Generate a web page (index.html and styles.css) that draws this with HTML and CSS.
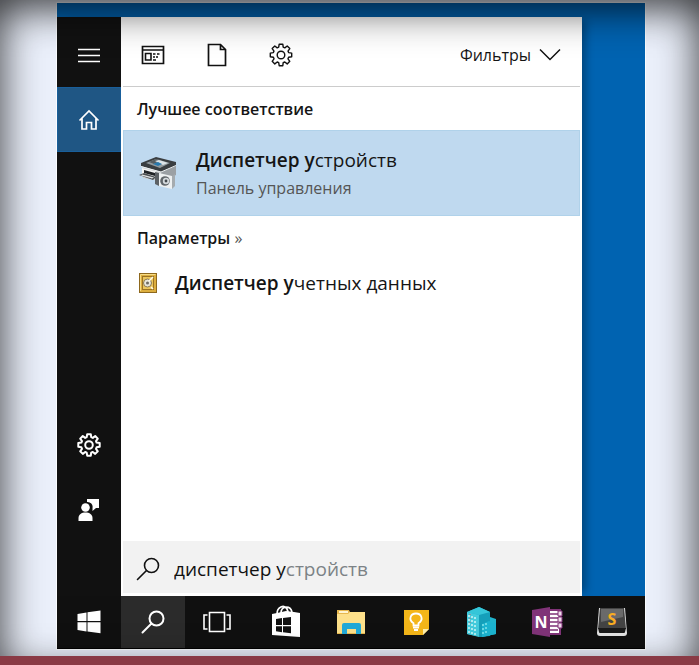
FILE: index.html
```html
<!DOCTYPE html>
<html lang="ru">
<head>
<meta charset="utf-8">
<meta name="viewport" content="width=device-width, initial-scale=1">
<title>Диспетчер устройств</title>
<link rel="stylesheet" href="styles.css">
</head>
<body>
<svg class="defs" width="0" height="0" aria-hidden="true">
  <symbol id="gear" viewBox="0 0 24 24">
    <g fill="none" stroke="currentColor" stroke-linejoin="round">
      <path d="M10.2 1.2h3.6l.4 3 1.6.7 2.4-1.9 2.6 2.6-1.8 2.5.6 1.5 3.1.5v3.7l-3.1.5-.6 1.5 1.8 2.5-2.6 2.6-2.4-1.9-1.6.7-.4 3h-3.6l-.5-3-1.5-.7-2.4 1.9-2.6-2.6 1.8-2.5-.6-1.5-3.1-.5v-3.7l3.1-.5.6-1.5-1.8-2.5 2.6-2.6 2.4 1.9 1.5-.7z"/>
      <circle cx="12" cy="12" r="3.8"/>
    </g>
  </symbol>
  <symbol id="loupe" viewBox="0 0 24 24">
    <g fill="none" stroke="currentColor" stroke-linecap="round"><circle cx="15.5" cy="8.5" r="7"/><path d="M10.5 13.5 1.5 22.5"/></g>
  </symbol>
</svg>

<main class="desktop">
  <div class="start">
    <nav class="rail" aria-label="Меню">
      <button class="rail-button menu" aria-label="Меню">
        <svg width="24" height="16" viewBox="0 0 24 16"><path d="M1 2.500h22M1 8.500h22M1 14.500h22" stroke="#fff" stroke-width="1.600"/></svg>
      </button>
      <button class="rail-button home" aria-label="Главная">
        <svg width="22" height="22" viewBox="0 0 22 22"><path d="M1.500 11.500 11 2l9.500 9.500M4 9.500V20h4.500v-6.500h5V20H18V9.500" fill="none" stroke="#fff" stroke-width="1.700"/></svg>
      </button>
      <button class="rail-button rail-settings" aria-label="Параметры"><svg class="gear-light" width="24" height="24"><use href="#gear"/></svg></button>
      <button class="rail-button" aria-label="Отзывы">
        <svg width="24" height="24" viewBox="0 0 24 24"><path d="M10 1h12v9h-3l-3.500 3v-3a5 5 0 0 0-5.500-6z" fill="#fff"/><circle cx="8.500" cy="9.500" r="4.300" fill="#fff"/><path d="M1.500 23v-3c0-3.500 3-5.500 7-5.500s7 2 7 5.500v3z" fill="#fff"/></svg>
      </button>
    </nav>

    <section class="panel" aria-label="Результаты поиска">
      <header class="toolbar">
        <button class="tool" aria-label="Приложения">
          <svg width="24" height="20" viewBox="0 0 24 20"><path d="M1.500 1.500h21v17h-21zM1.500 5h21" fill="none" stroke="#111" stroke-width="1.700"/><path d="M4.500 8.500h5.500v6.500H4.500zM12 9h2.500M16 9h2.500M12 12h2M15 12h2M12 15h3" fill="none" stroke="#111" stroke-width="1.600"/></svg>
        </button>
        <button class="tool" aria-label="Документы">
          <svg width="20" height="24" viewBox="0 0 20 24"><path d="M1.500 1.500h12l5 5v16h-17zM13.500 1.500v5h5" fill="none" stroke="#111" stroke-width="1.700"/></svg>
        </button>
        <button class="tool" aria-label="Настройки"><svg class="gear-dark" width="24" height="24"><use href="#gear"/></svg></button>
        <button class="filters">Фильтры
          <svg width="22" height="13" viewBox="0 0 22 13"><path d="m1 1.500 10 10 10-10" fill="none" stroke="#111" stroke-width="1.500"/></svg>
        </button>
      </header>

      <h2 class="heading">Лучшее соответствие</h2>
      <button class="best">
        <svg class="device" width="40" height="36" viewBox="0 0 40 36">
          <path d="m5 12 18 4v10L5 23z" fill="#c9cccd"/>
          <path d="m23 16 15-7v11l-15 8z" fill="#9ba0a4"/>
          <path d="M3 8 18 2l20 5v4l-15 6L3 11z" fill="#3a3e41"/>
          <path d="m8 8 10-4 14 4-10 5z" fill="#929b9f"/>
          <path d="m11 7 7-3 5 1-7 4z" fill="#565d61"/>
          <path d="m17 6 4-1 9 3-5 2z" fill="#dde4e7"/>
          <path d="m15 9 5-2 4 2-4 2z" fill="#2878ad"/>
          <path d="m3 11.500 20 5.500 15-6.500" fill="none" stroke="#eef1f2"/>
          <path d="m4 13 14 3.500v7L4 20z" fill="#f4f5f5"/>
          <path d="m6 15 11 3v3L6 18z" fill="#202326"/>
          <path d="m1 20 5-2 12 4-3 3z" fill="#4b4f52"/>
          <path d="m4 19.500 12 3-2 1-11-3z" fill="#e0e2e3"/>
          <path d="m17 17 4 1v13l-4-2z" fill="#5c6165"/>
          <path d="m21 18 13 3v13l-13-3z" fill="#edf0f1"/>
          <path d="m34 21 3-2v12l-3 3z" fill="#a5abaf"/>
          <circle cx="27" cy="26" r="4.800" fill="#60666a"/><circle cx="28" cy="26" r="3.200" fill="#d5dadd"/><circle cx="28" cy="26" r="1.400" fill="#42484c"/>
        </svg>
        <span class="best-text">
          <span class="title"><b>Диспетчер у</b>стройств</span>
          <span class="subtitle">Панель управления</span>
        </span>
      </button>

      <h2 class="heading settings-heading">Параметры <span class="more">»</span></h2>
      <button class="result">
        <svg width="18" height="20" viewBox="0 0 18 20">
          <rect x=".5" y=".5" width="17" height="19" fill="#dcae3f" stroke="#8e681d"/>
          <rect x="3.500" y="3.500" width="11" height="13" fill="#ecc65c" stroke="#9b7324"/>
          <path d="M1.500 18V1.500h15" fill="none" stroke="#f6dc86"/>
          <circle cx="8.500" cy="10" r="4" fill="#e8e6dc" stroke="#8a7b55"/><circle cx="8.500" cy="10" r="1.500" fill="#6d6b62"/>
          <path d="m10 8 4-4M12 14l2 2" stroke="#fffbe8" stroke-width="1.500"/>
        </svg>
        <span class="title"><b>Диспетчер у</b>четных данных</span>
      </button>

      <label class="search">
        <svg class="search-loupe" width="24" height="24"><use href="#loupe"/></svg>
        <span class="query"><input type="text" size="9" value="диспетчер у" aria-label="Поиск"><span class="hint">стройств</span></span>
      </label>
    </section>
  </div>

  <footer class="taskbar">
    <button class="task" aria-label="Пуск">
      <svg width="24" height="24" viewBox="0 0 24 24"><path d="M.5 4l9-1.500V11H.5zM10.500 2.300 23.500.5V11h-13zM.5 12.300h9v9.200L.5 20zM10.500 12.300h13v11l-13-1.800z" fill="#fff"/></svg>
    </button>
    <button class="task active" aria-label="Поиск"><svg class="task-loupe" width="24" height="24"><use href="#loupe"/></svg></button>
    <button class="task" aria-label="Представление задач">
      <svg width="28" height="22" viewBox="0 0 28 22"><path d="M6.500 1.500h15v19h-15zM4.500 4H1v14h3.500M23.500 4H27v14h-3.500" fill="none" stroke="#fff" stroke-width="1.600"/></svg>
    </button>
    <div class="apps">
      <button class="task" aria-label="Магазин">
        <svg width="32" height="36" viewBox="0 0 32 36"><path d="M7 10C7 3 14 0 17 5q1 2 1 4M11 9c0-7 9-8 11-1" fill="none" stroke="#fff" stroke-width="1.700"/><path d="m2 10 5-1 9-2 8 1 6 1v24L2 31z" fill="#fff"/><path d="m6 15 6-1v7H6zM13 14l8-1v8h-8zM6 22.300h6v6l-6-1zM13 22.300h8v7l-8-1z" fill="#111"/></svg>
      </button>
      <button class="task" aria-label="Проводник">
        <svg width="30" height="26" viewBox="0 0 30 26"><path d="M1 1h12l1 2h15v22H1z" fill="#e7b84f"/><path d="M3 2h9v2H3z" fill="#fff4cf"/><path d="M1 5h11l2-2h15v21H1z" fill="#fde08a"/><path d="M6 16q0-2 2-2h15q2 0 2 2v9h-5v-5h-9v5H6z" fill="#22a9d8"/></svg>
      </button>
      <button class="task" aria-label="Заметки">
        <svg width="27" height="27" viewBox="0 0 27 27"><path d="M1 1h25v19l-6 6H1z" fill="#f4b619"/><path d="M20 26v-6h6z" fill="#fff0ae"/><path d="M10.500 16.500v-2.300C5 10.500 7.500 4.500 13 4.500s8 6 2.500 9.700v2.300z" fill="none" stroke="#fff" stroke-width="1.800"/><path d="M10 18.500h6M11 21h4" stroke="#fff" stroke-width="1.800"/></svg>
      </button>
      <button class="task" aria-label="Город">
        <svg width="31" height="32" viewBox="0 0 31 32"><path d="m1 6 12-5 11 5v5l6 2v15l-14 3-15-3z" fill="#20b4cc"/><path d="m13 8 11-2v24l-11 1z" fill="#159fba"/><path d="m1 6 12 3v22L1 28z" fill="#43cbdc"/><path d="m1 6 12-5 11 5-11 3z" fill="#35c6d9"/><path d="m16 18 7-3 7 3v10l-14 3z" fill="#1cb4d0"/><path d="M3 9v18M6 10v18M9 11v18" stroke="#d9f8f7" stroke-width="1.400" stroke-dasharray="2 2"/><path d="M17 18v11M20 17v11" stroke="#8be9ef" stroke-width="1.400" stroke-dasharray="2 2"/><path d="M4 8v10" stroke="#c65464" stroke-dasharray="1 3"/></svg>
      </button>
      <button class="task" aria-label="OneNote">
        <svg width="32" height="32" viewBox="0 0 32 32"><path d="M17 4h12v24H17z" fill="#fff" stroke="#803378" stroke-width="2"/><path d="M19 8h8M19 12h8M19 16h8M19 20h8M19 24h8" stroke="#803378" stroke-width="1.500"/><path d="M27 5h4v5h-4zM27 11h4v5h-4zM27 17h4v5h-4z" fill="#efdceb" stroke="#803378"/><path d="m1 4 18-3v30L1 28z" fill="#803378"/><text class="note-letter" x="10" y="22" text-anchor="middle">N</text></svg>
      </button>
      <button class="task" aria-label="Sublime Text">
        <svg class="keycap" width="32" height="30" viewBox="0 0 32 30"><path d="M3 1h26l2 25q0 3-3 3H4q-3 0-3-3z" fill="#e4e4e4"/><path d="M4 1h24l2 21H2z" fill="#444"/><path d="M5 2h22v8L5 15z" fill="#6a6a6a"/><path d="M2 21h28l-1 4q0 1-1 1H4q-1 0-1-1z" fill="#1a1a1a"/><text class="sublime-letter" x="16" y="18" text-anchor="middle">S</text></svg>
      </button>
    </div>
  </footer>
</main>
</body>
</html>
```
FILE: styles.css
```css
* { box-sizing: border-box; }

body {
  margin: 0;
  min-height: 100vh;
  padding: 3px 54px 7px 57px;
  display: flex;
  flex-direction: column;
  background: #ebf0fb;
  border-bottom: 9px solid #8a3a45;
  color: #151515;
  font: 16px/24px "Open Sans", "Noto Sans", sans-serif;
}

/* soft shade along the window edges */
body::after {
  content: "";
  position: fixed;
  inset: 0;
  box-shadow: inset 0 8px 42px rgba(0, 0, 0, 0.8);
  clip-path: inset(0 0 9px 0);
  pointer-events: none;
}

.defs { position: absolute; }

button {
  margin: 0;
  padding: 0;
  border: 0;
  background: none;
  color: inherit;
  font: inherit;
  text-align: left;
}

svg { display: block; flex: none; }

.desktop {
  flex: 1;
  display: flex;
  flex-direction: column;
  padding-top: 14px;
  background: #0063b1;
  outline: 1px solid #fafcff;
}

.start {
  flex: 1;
  display: flex;
  margin-right: 63px;
  box-shadow: 8px 0 8px -4px rgba(0, 0, 0, 0.3);
}

.rail {
  width: 64px;
  display: flex;
  flex-direction: column;
  background: #111;
  padding-bottom: 54px;
}

.rail-button {
  height: 65px;
  display: flex;
  align-items: center;
  justify-content: center;
}

.menu { height: 70px; padding-top: 6px; }
.home { background: #1f5684; border: 1px solid #195f9b; }
.rail-settings { margin-top: auto; }
.gear-light { color: #fff; stroke-width: 2; }
.gear-dark { color: #111; stroke-width: 1.4; }

.panel {
  flex: 1;
  display: flex;
  flex-direction: column;
  padding: 0 2px 3px;
  background: #fff;
}

.toolbar {
  height: 70px;
  display: flex;
  align-items: center;
  padding: 6px 19px 0 0;
  border-bottom: 1px solid #ccc;
}

.tool {
  width: 64px;
  height: 48px;
  padding-right: 4px;
  display: flex;
  align-items: center;
  justify-content: center;
}

.filters {
  margin-left: auto;
  display: flex;
  align-items: center;
  gap: 8px;
  font-weight: 500;
}

.heading {
  margin: 0;
  padding: 10px 14px 9px;
  font-size: 16px;
  line-height: 24px;
  font-weight: 600;
}

.best {
  height: 86px;
  display: flex;
  align-items: center;
  gap: 18px;
  padding-left: 14px;
  background: #bfd9ef;
  border: 1px solid #b0d2ea;
}

.best-text { display: flex; flex-direction: column; gap: 2px; }
.title { font-size: 19px; line-height: 28px; }
.title b { font-weight: 600; }
.subtitle { font-size: 16px; line-height: 24px; color: #555; }
.more { font-weight: 400; color: #555; }

.result {
  height: 48px;
  display: flex;
  align-items: center;
  gap: 18px;
  padding-left: 16px;
}

.search {
  height: 52px;
  margin-top: auto;
  display: flex;
  align-items: center;
  gap: 14px;
  padding: 3px 0 0 13px;
  background: #f2f2f2;
}

.search-loupe { color: #111; stroke-width: 1.6; }
.task-loupe { color: #fff; stroke-width: 2; }

.query {
  display: flex;
  align-items: baseline;
  font-size: 19px;
  line-height: 28px;
}

.query input {
  field-sizing: content;
  margin: 0;
  padding: 0;
  border: 0;
  outline: 0;
  background: none;
  color: #111;
  font: inherit;
}

.hint { color: #7c8286; }

.taskbar {
  height: 53px;
  display: flex;
  position: relative;
  background: #101010;
  border-bottom: 1px solid #000;
}

.task {
  width: 64px;
  display: flex;
  align-items: center;
  justify-content: center;
}

.active { background: #2b2b2b; }

.apps {
  flex: 1;
  display: flex;
  padding-left: 4px;
}

.apps .task { flex: 1; }

.keycap { overflow: visible; }
.note-letter { font: bold 16px "Open Sans", sans-serif; fill: #fff; }
.sublime-letter { font: bold 16px "Open Sans", sans-serif; fill: #f9ad22; }
```
